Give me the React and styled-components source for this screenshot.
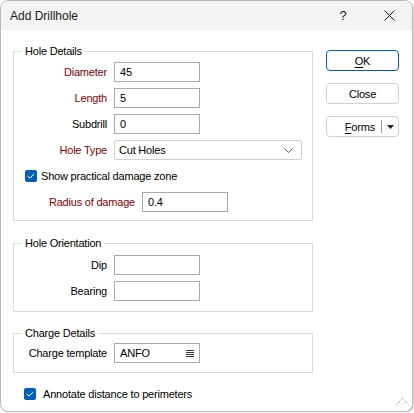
import React from "react";
import styled, { createGlobalStyle } from "styled-components";

const GlobalStyle = createGlobalStyle`
  html, body { margin: 0; padding: 0; background: #ffffff; }
  body { font-family: "Liberation Sans", Arial, sans-serif; }
  * { box-sizing: border-box; }
`;

const RED = "#7f0000";

const Window = styled.div`
  position: relative;
  width: 413px;
  height: 412px;
  border: 1px solid #b8b8b8;
  border-radius: 8px;
  overflow: hidden;
  background: #ffffff;
  display: flex;
  flex-direction: column;
  box-shadow: 1px 1px 0 #d6d6d6;
`;

const TitleBar = styled.div`
  height: 29px;
  flex: none;
  background: #f3f3f3;
  display: flex;
  align-items: center;
  padding-left: 9px;
`;

const TitleText = styled.div`
  flex: 1;
  font-size: 12px;
  color: #1a1a1a;
  padding-top: 1px;
`;

const CaptionButton = styled.div`
  width: ${(p) => p.$w}px;
  height: 29px;
  display: flex;
  align-items: center;
  justify-content: center;
  font-size: 13px;
  color: #1a1a1a;
`;

const Body = styled.div`
  flex: 1;
  display: flex;
  padding: 13px 0 0 12px;
  font-size: 11px;
  letter-spacing: -0.2px;
  color: #000;
`;

const LeftColumn = styled.div`
  width: 300px;
  display: flex;
  flex-direction: column;
`;

const RightColumn = styled.div`
  width: 73px;
  margin-left: 13px;
  padding-top: 7px;
  display: flex;
  flex-direction: column;
  gap: 12px;
`;

const Group = styled.fieldset`
  margin: ${(p) => p.$mt || 0}px 0 0 0;
  padding: ${(p) => p.$pt}px 0 ${(p) => p.$pb}px 0;
  border: 1px solid #dcdcdc;
  display: flex;
  flex-direction: column;
  gap: 6px;
  min-width: 0;
`;

const Legend = styled.legend`
  margin-left: 8px;
  padding: 0 3px;
  font-size: 11px;
  line-height: 16px;
  color: #000;
`;

const Row = styled.div`
  display: flex;
  align-items: center;
  height: 20px;
  gap: 7px;
`;

const Label = styled.div`
  width: ${(p) => p.$w || 93}px;
  text-align: right;
  color: ${(p) => (p.$required ? RED : "#000")};
  white-space: nowrap;
`;

const TextBox = styled.div`
  width: ${(p) => p.$w || 86}px;
  height: 20px;
  border: 1px solid #a9a9a9;
  background: #fff;
  display: flex;
  align-items: center;
  padding: 0 5px;
  font-size: 11px;
  color: #000;
`;

const Value = styled.span`
  flex: 1;
`;

const Select = styled.div`
  width: 188px;
  height: 20px;
  border: 1px solid #cfcfcf;
  border-radius: 2px;
  display: flex;
  align-items: center;
  padding: 0 8px 0 4px;
`;

const CheckRow = styled.label`
  display: flex;
  align-items: center;
  height: 20px;
  padding-left: 11px;
  gap: ${(p) => p.$gap}px;
  margin-top: ${(p) => p.$mt || 0}px;
`;

const Box = styled.span`
  width: 12px;
  height: 12px;
  border-radius: 2px;
  background: #005fb8;
  display: flex;
  align-items: center;
  justify-content: center;
  flex: none;
`;

const Button = styled.div`
  height: 21px;
  border: 1px solid ${(p) => (p.$primary ? "#005fb8" : "#d0d0d0")};
  border-radius: 4px;
  background: #fff;
  display: flex;
  align-items: center;
  justify-content: center;
  font-size: 11px;
`;

const SplitButton = styled(Button)`
  justify-content: flex-end;
  padding-right: 0;
`;

const SplitMain = styled.span`
  padding-right: 6px;
`;

const SplitDivider = styled.span`
  width: 1px;
  height: 13px;
  background: #9a9a9a;
`;

const SplitArrow = styled.span`
  width: 16px;
  display: flex;
  align-items: center;
  justify-content: center;
`;

const Accel = styled.span`
  text-decoration: underline;
  text-underline-offset: 2px;
`;

const Grip = styled.svg`
  position: absolute;
  right: 3px;
  bottom: 6px;
`;

const Check = () => (
  <svg width="8" height="6" viewBox="0 0 8 6">
    <path d="M0.8 3.1 L3 5.1 L7.2 0.9" fill="none" stroke="#fff" strokeWidth="1" />
  </svg>
);

export default function App() {
  return (
    <>
      <GlobalStyle />
      <Window>
        <TitleBar>
          <TitleText>Add Drillhole</TitleText>
          <CaptionButton $w={46}>?</CaptionButton>
          <CaptionButton $w={46}>
            <svg width="11" height="11" viewBox="0 0 11 11">
              <path d="M0.5 0.5 L10.5 10.5 M10.5 0.5 L0.5 10.5" stroke="#1a1a1a" strokeWidth="1" />
            </svg>
          </CaptionButton>
        </TitleBar>
        <Body>
          <LeftColumn>
            <Group $pt={3} $pb={8}>
              <Legend>Hole Details</Legend>
              <Row>
                <Label $required>Diameter</Label>
                <TextBox>45</TextBox>
              </Row>
              <Row>
                <Label $required>Length</Label>
                <TextBox>5</TextBox>
              </Row>
              <Row>
                <Label>Subdrill</Label>
                <TextBox>0</TextBox>
              </Row>
              <Row>
                <Label $required>Hole Type</Label>
                <Select>
                  <Value>Cut Holes</Value>
                  <svg width="9" height="5" viewBox="0 0 9 5">
                    <path d="M0.5 0.5 L4.5 4.5 L8.5 0.5" fill="none" stroke="#555" strokeWidth="1" />
                  </svg>
                </Select>
              </Row>
              <CheckRow $gap={4}>
                <Box><Check /></Box>
                Show practical damage zone
              </CheckRow>
              <Row>
                <Label $required $w={121}>Radius of damage</Label>
                <TextBox>0.4</TextBox>
              </Row>
            </Group>
            <Group $mt={14} $pt={4} $pb={10}>
              <Legend>Hole Orientation</Legend>
              <Row>
                <Label>Dip</Label>
                <TextBox />
              </Row>
              <Row>
                <Label>Bearing</Label>
                <TextBox />
              </Row>
            </Group>
            <Group $mt={13} $pt={2} $pb={9}>
              <Legend>Charge Details</Legend>
              <Row>
                <Label>Charge template</Label>
                <TextBox>
                  <Value>ANFO</Value>
                  <svg width="8" height="8" viewBox="0 0 8 8">
                    <path d="M0 1.5 H8 M0 3.5 H8 M0 5.5 H8 M0 7.5 H8" stroke="#333" strokeWidth="1" />
                  </svg>
                </TextBox>
              </Row>
            </Group>
            <CheckRow $gap={7} $mt={11}>
              <Box><Check /></Box>
              Annotate distance to perimeters
            </CheckRow>
          </LeftColumn>
          <RightColumn>
            <Button $primary><Accel>O</Accel>K</Button>
            <Button>Close</Button>
            <SplitButton>
              <SplitMain><Accel>F</Accel>orms</SplitMain>
              <SplitDivider />
              <SplitArrow>
                <svg width="7" height="4" viewBox="0 0 7 4">
                  <path d="M0 0 H7 L3.5 4 Z" fill="#222" />
                </svg>
              </SplitArrow>
            </SplitButton>
          </RightColumn>
        </Body>
        <Grip width="13" height="7" viewBox="0 0 13 7">
          <path d="M0.5 6.5 L6.5 0.5 L12.5 6.5" fill="none" stroke="#888" strokeWidth="1" strokeDasharray="1 1" />
        </Grip>
      </Window>
    </>
  );
}
